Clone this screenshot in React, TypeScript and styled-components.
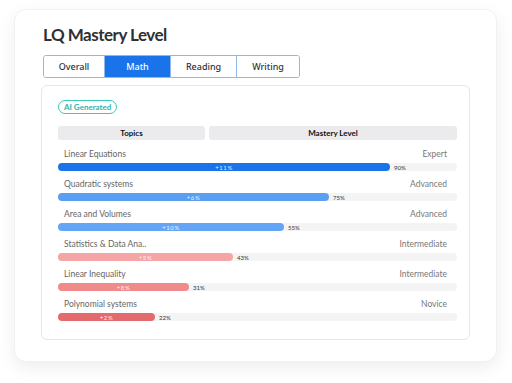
import styled, { createGlobalStyle } from 'styled-components';

const GlobalStyle = createGlobalStyle`
  html, body {
    margin: 0;
    padding: 0;
    background: #ffffff;
    font-family: 'Lato', 'Noto Sans', sans-serif;
  }
`;

const Page = styled.div`
  width: 512px;
  height: 383px;
  box-sizing: border-box;
  padding: 9px 15px 0 14px;
`;

const Card = styled.div`
  width: 483px;
  height: 353px;
  box-sizing: border-box;
  padding: 14px 26px 0 26px;
  background: #fff;
  border-radius: 12px;
  border: solid 1px #f1f1f1;
  box-shadow: 0 6px 18px rgba(0, 0, 0, 0.07);
`;

const Title = styled.h1`
  margin: 0 0 9px 2px;
  font-size: 17px;
  line-height: 22px;
  letter-spacing: -0.5px;
  font-weight: 700;
  color: #2f3033;
`;

const Tabs = styled.div`
  display: flex;
  margin-left: 2px;
  width: max-content;
  border: solid 1px #8db9ec;
  border-radius: 3px;
  overflow: hidden;
`;

const Tab = styled.div<{ $active?: boolean; $w: number }>`
  width: ${(p) => p.$w}px;
  height: 21px;
  display: flex;
  align-items: center;
  justify-content: center;
  font-family: 'Noto Sans', sans-serif;
  font-size: 9px;
  font-weight: 500;
  color: ${(p) => (p.$active ? '#fff' : '#333')};
  background: ${(p) => (p.$active ? '#1a73e8' : '#fff')};
  & + & {
    border-left: solid 1px #8db9ec;
  }
`;

const Panel = styled.div`
  margin-top: 7px;
  width: 429px;
  height: 255px;
  box-sizing: border-box;
  padding: 14px 12px 0 16px;
  border: solid 1px #e6e6e6;
  border-radius: 6px;
`;

const Pill = styled.div`
  display: flex;
  align-items: center;
  width: max-content;
  height: 12px;
  padding: 0 5px;
  border-radius: 8px;
  border: solid 1px #3cc8b4;
  font-size: 8px;
  line-height: 12px;
  font-weight: 700;
  color: #2bb6b0;
`;

const HeaderRow = styled.div`
  display: grid;
  grid-template-columns: 147px 248px;
  gap: 4px;
  margin: 12px 0 8px;
`;

const HeaderCell = styled.div`
  height: 14px;
  display: flex;
  align-items: center;
  justify-content: center;
  background: #ebebee;
  border-radius: 3px;
  font-size: 8px;
  font-weight: 700;
  color: #111;
`;

const Row = styled.div`
  margin-bottom: 7px;
`;

const LabelLine = styled.div`
  display: flex;
  justify-content: space-between;
  height: 12px;
  line-height: 12px;
  padding: 0 10px 0 6px;
  font-size: 8.5px;
  color: #666;
  margin-bottom: 3px;
`;

const Level = styled.span`
  color: #777;
`;

const Track = styled.div`
  display: flex;
  align-items: center;
  width: 399px;
  height: 8px;
  border-radius: 4px;
  background: #f4f4f5;
`;

const Fill = styled.div<{ $color: string }>`
  height: 8px;
  border-radius: 4px;
  background: ${(p) => p.$color};
  display: flex;
  align-items: center;
  justify-content: center;
  font-size: 6px;
  letter-spacing: 0.6px;
  color: rgba(255, 255, 255, 0.9);
`;

const Pct = styled.span`
  margin-left: 4px;
  font-size: 6px;
  color: #333;
`;

const topics = [
  { name: 'Linear Equations', level: 'Expert', pct: 90, gain: 11, w: 332, color: '#1a73e8' },
  { name: 'Quadratic systems', level: 'Advanced', pct: 75, gain: 6, w: 271, color: '#5b9ff2' },
  { name: 'Area and Volumes', level: 'Advanced', pct: 55, gain: 10, w: 226, color: '#64a6f5' },
  { name: 'Statistics & Data Ana..', level: 'Intermediate', pct: 43, gain: 5, w: 175, color: '#f5a5a5' },
  { name: 'Linear Inequality', level: 'Intermediate', pct: 31, gain: 8, w: 131, color: '#ef8b8b' },
  { name: 'Polynomial systems', level: 'Novice', pct: 22, gain: 2, w: 97, color: '#e46b6d' },
];

const App = () => {
  return (
    <>
      <GlobalStyle />
      <Page>
        <Card>
          <Title>LQ Mastery Level</Title>
          <Tabs>
            <Tab $w={60}>Overall</Tab>
            <Tab $w={65} $active>
              Math
            </Tab>
            <Tab $w={65}>Reading</Tab>
            <Tab $w={62}>Writing</Tab>
          </Tabs>
          <Panel>
            <Pill>AI Generated</Pill>
            <HeaderRow>
              <HeaderCell>Topics</HeaderCell>
              <HeaderCell>Mastery Level</HeaderCell>
            </HeaderRow>
            {topics.map((t) => (
              <Row key={t.name}>
                <LabelLine>
                  <span>{t.name}</span>
                  <Level>{t.level}</Level>
                </LabelLine>
                <Track>
                  <Fill $color={t.color} style={{ width: t.w }}>
                    +{t.gain}%
                  </Fill>
                  <Pct>{t.pct}%</Pct>
                </Track>
              </Row>
            ))}
          </Panel>
        </Card>
      </Page>
    </>
  );
};

export default App;
